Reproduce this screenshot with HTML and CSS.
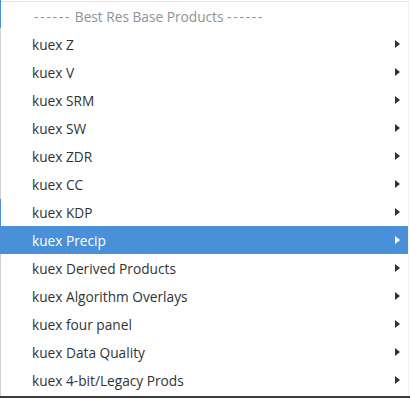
FILE: index.html
```html
<!DOCTYPE html>
<html lang="en">
  <head>
    <meta charset="UTF-8" />
    <title>Products menu</title>
    <link rel="stylesheet" href="styles.css">
  </head>
  <body>
    <div class="frame">
      <div class="edge"></div>
      <ul class="menu">
        <li class="title"><span class="dash">------</span> Best Res Base Products <span class="dash">------</span></li>
        <li class="item"><span>kuex Z</span><i class="arrow"></i></li>
        <li class="item"><span>kuex V</span><i class="arrow"></i></li>
        <li class="item"><span>kuex SRM</span><i class="arrow"></i></li>
        <li class="item"><span>kuex SW</span><i class="arrow"></i></li>
        <li class="item"><span>kuex ZDR</span><i class="arrow"></i></li>
        <li class="item"><span>kuex CC</span><i class="arrow"></i></li>
        <li class="item"><span>kuex KDP</span><i class="arrow"></i></li>
        <li class="item active"><span>kuex Precip</span><i class="arrow"></i></li>
        <li class="item"><span>kuex Derived Products</span><i class="arrow"></i></li>
        <li class="item"><span>kuex Algorithm Overlays</span><i class="arrow"></i></li>
        <li class="item"><span>kuex four panel</span><i class="arrow"></i></li>
        <li class="item"><span>kuex Data Quality</span><i class="arrow"></i></li>
        <li class="item"><span>kuex 4-bit/Legacy Prods</span><i class="arrow"></i></li>
      </ul>
    </div>
    <div class="bottom"></div>
  </body>
</html>
```

FILE: styles.css
```css
body {
  margin: 0;
  padding: 0;
  background: #ffffff;
  font-family: "Open Sans", "Noto Sans", sans-serif;
  font-size: 13.7px;
  color: #2e3436;
  width: 410px;
  height: 398px;
  overflow: hidden;
}

.frame {
  display: flex;
  height: 396px;
}

.edge {
  width: 1px;
  flex: none;
  background: linear-gradient(
    180deg,
    #4a90d9 0px,
    #4a90d9 28px,
    #cfcfcf 28px,
    #cfcfcf 199px,
    #4a90d9 199px,
    #4a90d9 254px,
    #cfcfcf 254px
  );
}

.menu {
  flex: 1;
  list-style: none;
  margin: 1px 1px 0 0;
  padding: 0;
  border-top: 1px solid #e3e3e3;
  border-right: 1px solid #f0f0f0;
}

.menu li {
  height: 28px;
  display: flex;
  align-items: center;
}

.title {
  padding-left: 33px;
  color: #8f9294;
  white-space: pre;
}

.dash {
  letter-spacing: 1.8px;
}

.item {
  padding-left: 31px;
  padding-right: 8px;
  justify-content: space-between;
}

.arrow {
  width: 0;
  height: 0;
  border-left: 5px solid #2e3436;
  border-top: 4px solid transparent;
  border-bottom: 4px solid transparent;
}

.active {
  background: #4a90d9;
  color: #ffffff;
}

.active .arrow {
  border-left-color: #ffffff;
}

.bottom {
  height: 2px;
  background: #3a3a3a;
}
```
